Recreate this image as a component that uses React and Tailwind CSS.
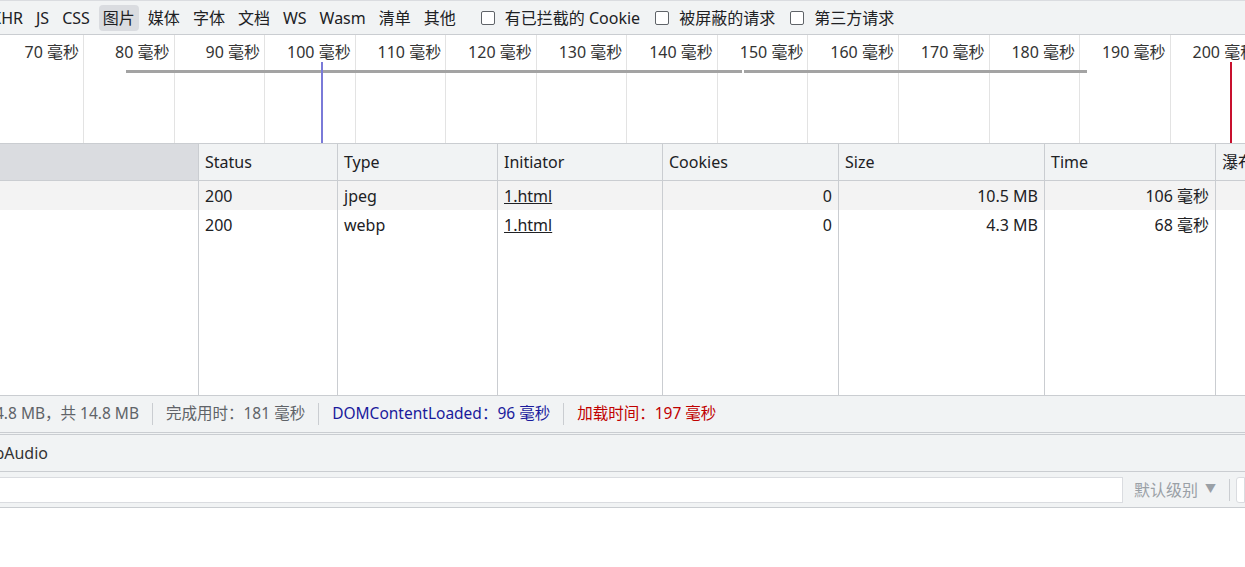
import React from 'react'

// Network panel (zh-CN devtools), image filter active
const TYPES = ['JS', 'CSS', '图片', '媒体', '字体', '文档', 'WS', 'Wasm', '清单', '其他']
const TICKS = [70, 80, 90, 100, 110, 120, 130, 140, 150, 160, 170, 180, 190, 200]
const tickX = v => 83 + ((v - 70) / 10) * 90.55

const ROWS = [
  { status: '200', type: 'jpeg', initiator: '1.html', cookies: '0', size: '10.5 MB', time: '106 毫秒' },
  { status: '200', type: 'webp', initiator: '1.html', cookies: '0', size: '4.3 MB', time: '68 毫秒' },
]

const GRID = 'grid grid-cols-[198px_139px_160px_165px_176px_206px_171px_1fr]'

function Checkbox({ label, className = '' }) {
  return (
    <label className={`flex items-center gap-[10px] ${className}`}>
      <span className="w-[14px] h-[14px] border border-[#5f6368] rounded-[2px] bg-white shrink-0" />
      <span>{label}</span>
    </label>
  )
}

function FilterBar() {
  return (
    <div className="h-[35px] flex items-center gap-[5px] bg-[#f1f3f4] border-y border-[#cacdd1] border-t-[#dadce0] whitespace-nowrap">
      <div className="w-[27px] shrink-0 overflow-hidden flex justify-end">
        <span className="pr-[4px]">Fetch/XHR</span>
      </div>
      {TYPES.map(t => (
        <span key={t} className={`px-[4px] h-[26px] flex items-center rounded-[4px] ${t === '图片' ? 'bg-[#dadce0]' : ''}`}>
          {t}
        </span>
      ))}
      <Checkbox label="有已拦截的 Cookie" className="ml-[16px]" />
      <Checkbox label="被屏蔽的请求" className="ml-[10px]" />
      <Checkbox label="第三方请求" className="ml-[10px]" />
    </div>
  )
}

function Overview() {
  return (
    <div className="relative h-[109px] bg-white border-b border-[#cacdd1] overflow-hidden">
      {TICKS.map(v => (
        <React.Fragment key={v}>
          <div className="absolute top-0 bottom-0 w-px bg-[#e3e3e3]" style={{ left: tickX(v) }} />
          <span
            className="absolute top-[5px] whitespace-nowrap text-[#333] -translate-x-full pr-[4px]"
            style={{ left: tickX(v) }}
          >
            {v} 毫秒
          </span>
        </React.Fragment>
      ))}
      <div className="absolute top-[35px] left-[126px] w-[616px] h-[3px] bg-[#a3a3a3]" />
      <div className="absolute top-[35px] left-[744px] w-[343px] h-[3px] bg-[#a3a3a3]" />
      <div className="absolute top-[27px] bottom-0 left-[321px] w-[2px] bg-[#7a7ad8]" />
      <div className="absolute top-[27px] bottom-0 left-[1230px] w-[2px] bg-[#c8102e]" />
    </div>
  )
}

function Table() {
  const cell = 'border-l border-[#cacdd1] px-[6px] flex items-center whitespace-nowrap overflow-hidden'
  return (
    <div>
      <div className={`${GRID} h-[37px] bg-[#f1f3f4] border-b border-[#cacdd1]`}>
        <div className="bg-[#dadce0]" />
        <div className={cell}>Status</div>
        <div className={cell}>Type</div>
        <div className={cell}>Initiator</div>
        <div className={cell}>Cookies</div>
        <div className={cell}>Size</div>
        <div className={cell}>Time</div>
        <div className={cell}>瀑布</div>
      </div>
      {ROWS.map((r, i) => (
        <div key={i} className={`${GRID} h-[29px] ${i === 0 ? 'bg-[#f3f3f3]' : 'bg-white'}`}>
          <div />
          <div className={cell}>{r.status}</div>
          <div className={cell}>{r.type}</div>
          <div className={cell}><span className="underline">{r.initiator}</span></div>
          <div className={`${cell} justify-end`}>{r.cookies}</div>
          <div className={`${cell} justify-end`}>{r.size}</div>
          <div className={`${cell} justify-end`}>{r.time}</div>
          <div className={cell} />
        </div>
      ))}
      <div className={`${GRID} h-[156px] bg-white`}>
        <div />
        {[0, 1, 2, 3, 4, 5, 6].map(k => <div key={k} className="border-l border-[#cacdd1]" />)}
      </div>
    </div>
  )
}

function Summary() {
  const sep = <span className="w-px h-[22px] bg-[#cacdd1] mx-[13px]" />
  return (
    <div className="h-[37px] flex items-center bg-[#f1f3f4] border-t border-[#cacdd1] text-[15.5px] text-[#5f6368] whitespace-nowrap">
      <div className="w-[139px] shrink-0 overflow-hidden flex justify-end">
        <span>已传输 14.8 MB，共 14.8 MB</span>
      </div>
      {sep}
      <span>完成用时：181 毫秒</span>
      {sep}
      <span className="text-[#1a1a9c]">DOMContentLoaded：96 毫秒</span>
      {sep}
      <span className="text-[#c00000]">加载时间：197 毫秒</span>
    </div>
  )
}

export default function App() {
  return (
    <div className="w-[1245px] h-[567px] overflow-hidden bg-white text-[16px] text-[#202124] font-['Noto_Sans','Noto_Sans_CJK_SC',sans-serif]">
      <FilterBar />
      <Overview />
      <Table />
      <Summary />
      <div className="h-[3px] border-y border-[#cacdd1] bg-[#f1f3f4]" />
      <div className="h-[37px] flex items-center bg-[#f1f3f4] border-b border-[#cacdd1] whitespace-nowrap text-[#333]">
        <div className="w-[48px] shrink-0 overflow-hidden flex justify-end">
          <span>WebAudio</span>
        </div>
      </div>
      <div className="h-[36px] flex items-center bg-[#f1f3f4] border-b border-[#cacdd1] whitespace-nowrap">
        <div className="w-[1123px] h-[26px] bg-white border border-l-0 border-[#dadce0] shrink-0" />
        <span className="ml-[11px] text-[#9aa0a6]">默认级别</span>
        <span className="ml-[7px] text-[11px] text-[#9aa0a6]">▼</span>
        <span className="ml-[13px] w-px h-[22px] bg-[#cacdd1]" />
        <span className="ml-[7px] w-[20px] h-[26px] bg-white border border-[#dadce0] rounded-l-[3px]" />
      </div>
    </div>
  )
}
